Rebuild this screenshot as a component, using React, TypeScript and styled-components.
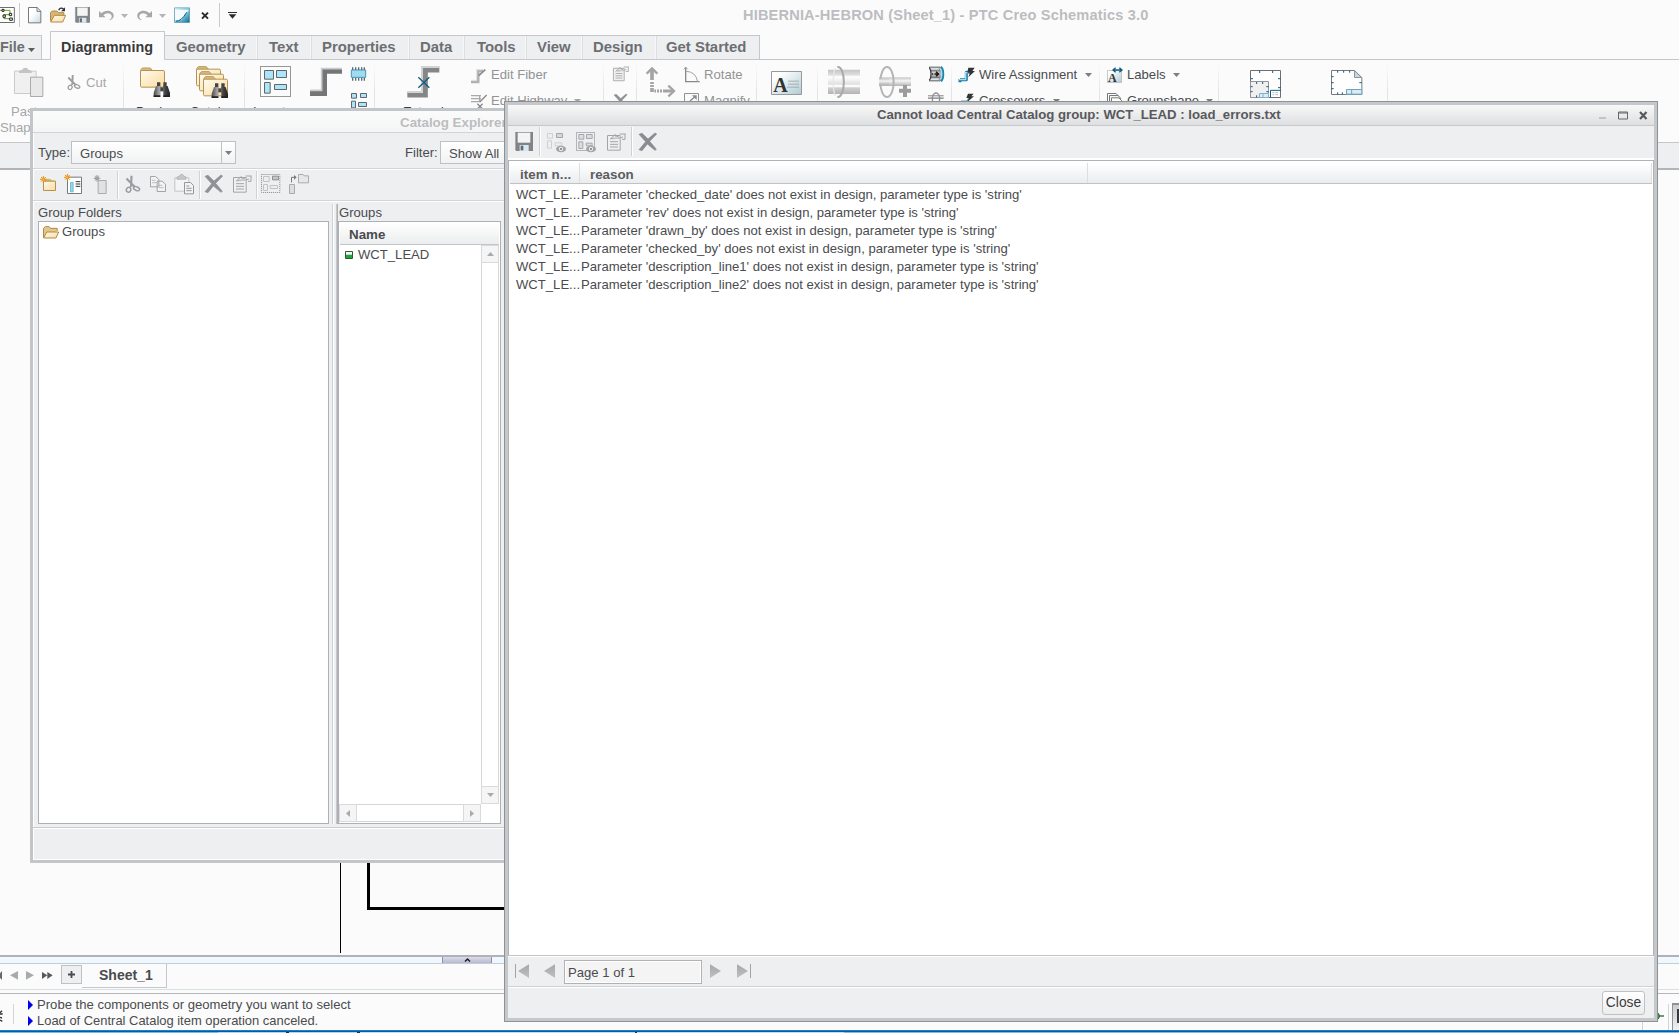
import React from "react";
import styled, { createGlobalStyle } from "styled-components";

const GlobalStyle = createGlobalStyle`
  * { box-sizing: border-box; }
  html, body { margin: 0; padding: 0; }
  body {
    width: 1679px; height: 1033px; overflow: hidden; background: #fbfbfb;
    font-family: "Liberation Sans", Arial, sans-serif; font-size: 13.1px; color: #4a4b4e;
  }
  svg { display: block; flex: none; overflow: visible; }
`;

const Screen = styled.div`
  position: relative; width: 1679px; height: 1033px; overflow: hidden;
  display: flex; flex-direction: column; background: #fbfbfb;
`;
const Label = styled.span<{ $s?: number; $ls?: number; $c?: string; $b?: boolean; $ml?: number }>`
  white-space: nowrap; flex: none; line-height: 16px;
  font-size: ${(p) => p.$s ?? 13.1}px; letter-spacing: ${(p) => p.$ls ?? 0}px;
  color: ${(p) => p.$c ?? "#4a4b4e"}; font-weight: ${(p) => (p.$b ? 700 : 400)};
  margin-left: ${(p) => p.$ml ?? 0}px;
`;
const IconBox = styled.span<{ $ml?: number; $mt?: number }>`
  display: block; flex: none; margin-left: ${(p) => p.$ml ?? 0}px; margin-top: ${(p) => p.$mt ?? 0}px;
`;

/* title bar */
const TitleBar = styled.header`
  height: 31px; flex: none; display: flex; align-items: flex-start; overflow: hidden;
`;
const QuickBar = styled.div`
  width: 743px; flex: none; display: flex; align-items: flex-start;
`;
const QuickRule = styled.i<{ $ml: number }>`
  width: 1px; height: 24px; margin: 3px 0 0 ${(p) => p.$ml}px; background: #c9cacc; flex: none;
`;
const AppTitle = styled.h1`
  margin: 7px 0 0; font: bold 14.6px/16px "Liberation Sans", Arial, sans-serif; color: #bcbdc0;
  white-space: nowrap; letter-spacing: 0.16px;
`;

/* ribbon tabs */
const Tabs = styled.nav`
  height: 29px; flex: none; display: flex; align-items: flex-end; box-shadow: inset 0 -1px #c5c7ca;
`;
const Tab = styled.div<{ $w: number; $x: number; $on?: boolean; $last?: boolean }>`
  width: ${(p) => p.$w}px; height: ${(p) => (p.$on ? 29 : 25)}px; flex: none; white-space: nowrap;
  padding: ${(p) => (p.$on ? 7 : 3)}px 0 0 ${(p) => p.$x}px;
  font: bold ${(p) => (p.$on ? 14.4 : 14.9)}px/17px "Liberation Sans", Arial, sans-serif;
  color: ${(p) => (p.$on ? "#3a3a3d" : "#6d6e72")};
  background: ${(p) => (p.$on ? "#fbfbfb" : "#edeff1")};
  border: solid #c5c7ca;
  border-width: ${(p) => (p.$on ? "1px 1px 0 1px" : "1px 0 1px 0")};
  border-radius: ${(p) => (p.$on ? 1 : 0)}px;
  box-shadow: ${(p) => (p.$on ? "none" : p.$last ? "inset -1px 0 #c5c7ca" : "inset -1px 0 #dcdee0, inset -2px 0 #f6f7f8")};
`;
const FileTab = styled(Tab)`
  display: flex; margin-right: 8px; box-shadow: inset -1px 0 #c5c7ca; font-size: 14.4px;
`;

/* ribbon */
const Ribbon = styled.section`
  height: 82px; flex: none; display: flex; overflow: hidden;
`;
const Group = styled.div<{ $w: number }>`
  width: ${(p) => p.$w}px; height: 82px; flex: none; display: flex; align-items: flex-start;
  border-right: 1px solid; border-image: linear-gradient(#fbfbfb 5%, #e3e4e6 40%, #e3e4e6) 1;
`;
const Col = styled.div<{ $w?: number; $ml?: number; $mt?: number }>`
  width: ${(p) => (p.$w ? p.$w + "px" : "auto")}; margin-left: ${(p) => p.$ml ?? 0}px; flex: none;
  padding-top: ${(p) => p.$mt ?? 0}px; display: flex; flex-direction: column; align-items: flex-start;
`;
const SmallRow = styled.div<{ $h?: number; $ml?: number }>`
  height: ${(p) => p.$h ?? 26}px; display: flex; align-items: center; margin-left: ${(p) => p.$ml ?? 0}px;
`;
const BigLabel = styled.div<{ $c?: string; $ml?: number; $first?: boolean }>`
  white-space: nowrap; line-height: 16px; color: ${(p) => p.$c ?? "#3a3a3d"}; margin-left: ${(p) => p.$ml ?? 0}px;
  width: 60px; flex: none; margin-top: ${(p) => (p.$first === false ? 0 : 5)}px;
`;
const GroupBand = styled.div`
  height: 28px; flex: none; background: #edeff1; border-top: 1px solid #c5c7ca; border-bottom: 2px solid #b2b4b7;
`;

/* canvas and bottom area */
const Canvas = styled.main`
  flex: 1; min-height: 0; background: #fbfbfb; overflow: hidden;
`;
const Drawing = styled.svg`
  margin: 690px 0 0 339px;
`;
const Splitter = styled.div`
  height: 9px; flex: none; background: #eff8fe; border-top: 2px solid #b0b2b5; border-bottom: 1px solid #c3cdd2;
`;
const Handle = styled.div`
  width: 50px; height: 6px; margin-left: 442px; border: solid #8d8da5; border-width: 0 1px;
  background: linear-gradient(#dcdcec, #b8b8d0); display: flex; justify-content: center;
`;
const SheetBar = styled.div`
  height: 26px; flex: none; display: flex; border-bottom: 1px solid #d8e2e6;
`;
const SheetAdd = styled.div`
  width: 21px; height: 19px; margin: 1px 0 0 8px; border: 1px solid #bfc1c4; background: #edeff1;
  display: flex; align-items: center; justify-content: center;
`;
const SheetTab = styled.div`
  width: 85px; height: 24px; border: solid #c5c7ca; border-width: 0 1px 1px 0; padding: 3px 0 0 17px;
`;
const Status = styled.footer`
  height: 37px; flex: none; margin-top: 3px; border-top: 1px solid #b5b7ba; display: flex;
`;
const StatusRule = styled.i<{ $ml: number; $h?: number }>`
  width: 1px; height: ${(p) => p.$h ?? 20}px; margin: 10px 0 0 ${(p) => p.$ml}px; background: #d3d4d6; flex: none;
`;
const Messages = styled.div`
  margin: 3px 0 0 14px; width: 1483px; display: flex; flex-direction: column; flex: none;
`;
const Message = styled.div`
  height: 16px; display: flex; align-items: center;
`;
const StatusEnd = styled.div`
  display: flex; margin-left: 124px; flex: none;
`;
const StatusButton = styled.div`
  width: 20px; height: 27px; margin: 9px 0 0 3px; border: 1px solid #8e9093; border-width: 2px 0 0 1px;
  background: linear-gradient(#c9cbce, #f0f0f1); padding: 4px 0 0 4px; flex: none;
`;
const TaskBar = styled.div`
  height: 3px; flex: none; border-top: 1px solid #0a84d8;
  background: linear-gradient(#10589a 0 1px, transparent 1px),
    linear-gradient(90deg, #7ab8de 0 218px, #b9d4e6 218px 286px, #0d3a5c 286px 289px, #b9d4e6 289px 357px, #0d3a5c 357px 360px, #c8dcea 360px 635px, #0d3a5c 635px 637px, #c8dcea 637px 844px, #86b8dc 844px);
`;

/* catalog window */
const CatalogWindow = styled.section`
  position: absolute; left: 30px; top: 108px; width: 600px; height: 755px; background: #edeff1;
  border: 3px solid #c3c6c9; display: flex; flex-direction: column; box-shadow: inset 1px 0 #fff;
`;
const CatalogTitle = styled.div`
  height: 22px; flex: none; border-bottom: 1px solid #d2d4d6; background: linear-gradient(#fbfbfb, #f4f5f5);
  padding: 4px 0 0 367px;
`;
const FilterRow = styled.div`
  height: 36px; flex: none; display: flex; align-items: flex-start; border-bottom: 1px solid #d2d4d6; padding: 8px 0 0 5px;
`;
const Combo = styled.div<{ $w: number }>`
  width: ${(p) => p.$w}px; height: 23px; border: 1px solid #bec0c3; flex: none;
  background: linear-gradient(#fff, #f1f2f3); display: flex; align-items: center; padding: 2px 0 0 8px;
`;
const ComboButton = styled.span`
  margin: -2px 0 0 auto; width: 14px; height: 21px; border-left: 1px solid #bec0c3; display: flex; align-items: center; justify-content: center;
`;
const CatalogTools = styled.div`
  height: 32px; flex: none; display: flex; border-top: 1px solid #fff; border-bottom: 1px solid #d2d4d6; padding-left: 7px;
`;
const ToolRule = styled.i<{ $ml: number; $h?: number }>`
  width: 2px; height: ${(p) => p.$h ?? 28}px; margin: 1px 0 0 ${(p) => p.$ml}px; background: linear-gradient(90deg, #cfd1d4 50%, #fff 50%); flex: none;
`;
const Panes = styled.div`
  height: 626px; flex: none; display: flex; border-top: 1px solid #fff; padding-left: 5px;
`;
const Pane = styled.div<{ $w: number }>`
  width: ${(p) => p.$w}px; flex: none; display: flex; flex-direction: column; padding-top: 2px;
`;
const PaneSplit = styled.div`
  width: 9px; height: 620px; margin-top: 2px; flex: none;
  background: linear-gradient(90deg, transparent 3px, #cfd1d4 3px 4px, #fff 4px 5px, transparent 5px 7px, #c6c8cb 7px 8px, #aeb0b3 8px);
`;
const PaneHead = styled.div<{ $x?: number }>`
  height: 17px; line-height: 18px; padding-left: ${(p) => p.$x ?? 0}px; white-space: nowrap;
`;
const Tree = styled.div`
  height: 603px; border: 1px solid #aeb0b3; background: #fff; padding: 2px 0 0 4px;
`;
const TreeItem = styled.div`
  display: flex; height: 16px; align-items: center;
`;
const ListBox = styled(Tree)`
  padding: 1px; display: flex; flex-direction: column;
`;
const ListHead = styled.div`
  height: 22px; flex: none; background: linear-gradient(#fff, #ebedee); border-bottom: 1px solid #c3c5c8; padding: 4px 0 0 9px;
`;
const ListBody = styled.div`
  height: 559px; flex: none; display: flex;
`;
const Items = styled.div`
  flex: 1; padding: 2px 0 0 5px;
`;
const VScroll = styled.div`
  width: 18px; border: 1px solid #d4d6d8; display: flex; flex-direction: column; justify-content: space-between; background: #fff;
`;
const ScrollBtn = styled.div`
  width: 16px; height: 16px; background: #f5f5f6; display: flex; align-items: center; justify-content: center;
  box-shadow: 0 0 0 1px #d9dadc; flex: none;
`;
const HScroll = styled.div`
  width: 142px; height: 18px; margin-left: -1px; border: 1px solid #d4d6d8; display: flex; justify-content: space-between; background: #fff;
`;
const CatalogFooter = styled.div`
  flex: 1; border-top: 1px solid #c9cbce; box-shadow: inset 0 1px #fff, inset 0 -1px #fff;
`;

/* error dialog */
const Dialog = styled.section`
  position: absolute; left: 504px; top: 101px; width: 1154px; height: 921px; background: #edeff1;
  border: 1px solid #8f9194; box-shadow: inset 0 0 0 3px #c5c8ca; padding: 3px; display: flex; flex-direction: column;
`;
const DialogTitle = styled.div`
  height: 21px; flex: none; display: flex; background: linear-gradient(#f8f8f8, #dedfe1); border-bottom: 1px solid #c6c8ca;
  padding: 2px 0 0 369px;
`;
const WinButtons = styled.div`
  margin: 4px 6px 0 auto; display: flex;
`;
const DialogTools = styled.div`
  height: 34px; flex: none; display: flex; border-bottom: 2px solid; border-image: linear-gradient(#d0d2d4 50%, #fff 50%) 1; padding-left: 7px;
`;
const Grid = styled.div`
  height: 796px; flex: none; background: #fff; border: 1px solid #b0b2b5; padding: 1px 1px 0 1px;
  border-bottom-color: #c3c5c8;
`;
const GridHead = styled.div`
  height: 22px; display: flex; background: linear-gradient(#fff 10%, #eaecee); border-bottom: 1px solid #c0c2c5;
`;
const HeadCell = styled.div<{ $w: number; $x: number }>`
  width: ${(p) => p.$w}px; padding: 4px 0 0 ${(p) => p.$x}px; border-right: 1px solid #dcdee0; flex: none; margin-top: 1px; height: 20px;
`;
const GridRows = styled.div`
  padding: 1px 0 0 6px;
`;
const GridRow = styled.div`
  height: 18px; display: flex; align-items: center;
`;
const Cell = styled.div<{ $w: number; $ls?: number }>`
  width: ${(p) => p.$w}px; white-space: nowrap; letter-spacing: ${(p) => p.$ls ?? 0}px; flex: none;
`;
const Pager = styled.div`
  height: 31px; flex: none; display: flex; align-items: flex-start; border-top: 1px solid #fff; border-bottom: 1px solid #cfd1d4; padding: 2px 0 0 7px;
`;
const PageField = styled.div`
  width: 138px; height: 24px; border: 1px solid #b0b2b5; box-shadow: inset 0 0 0 1px #fff; background: #f4f4f4; padding: 4px 0 0 3px; margin: 1px 8px 0 9px; white-space: nowrap;
`;
const DialogFooter = styled.div`
  flex: 1; border-top: 1px solid #fff; display: flex; justify-content: flex-end; padding: 3px 9px 0 0;
`;
const CloseButton = styled.button`
  width: 43px; height: 24px; border: 1px solid #bfc1c4; border-radius: 3px; background: linear-gradient(#fff, #ececed); padding: 0;
  font: 13.8px/20px "Liberation Sans", Arial, sans-serif; color: #3a3a3d; text-align: center;
`;

type IconProps = { x: number; y: number; w: number; h: number; ml?: number; mt?: number; children: React.ReactNode };
/* Artwork is authored at three units per pixel. */
const Icon = ({ x, y, w, h, ml, mt, children }: IconProps) => (
  <IconBox $ml={ml} $mt={mt}>
    <svg width={w} height={h} viewBox={`${x} ${y} ${w * 3} ${h * 3}`} fill="none">{children}</svg>
  </IconBox>
);
const Caret = ({ ml = 0, mt = 0, c = "#7d7e81" }: { ml?: number; mt?: number; c?: string }) => (
  <IconBox $ml={ml} $mt={mt}><svg width="7" height="4"><path d="M0 0h7L3.5 4z" fill={c} /></svg></IconBox>
);

const Gradients = styled.svg`
  position: absolute; width: 0; height: 0;
`;
const Defs = () => (
  <Gradients>
    <defs>
      <linearGradient id="fold" x1="0" y1="0" x2="1" y2="1"><stop offset="0" stopColor="#fffaf0" /><stop offset="1" stopColor="#fbdc9d" /></linearGradient>
      <linearGradient id="doc" x1="0" y1="0" x2="1" y2="1"><stop offset="0.4" stopColor="#fff" /><stop offset="1" stopColor="#c4d8e6" /></linearGradient>
      <linearGradient id="card" x1="0" y1="0" x2="1" y2="1"><stop offset="0.2" stopColor="#fff" /><stop offset="1" stopColor="#afcbd3" /></linearGradient>
      <linearGradient id="tube" x1="0" y1="0" x2="0" y2="1"><stop offset="0" stopColor="#c4c4c4" /><stop offset="0.4" stopColor="#f5f5f5" /><stop offset="1" stopColor="#b4b4b4" /></linearGradient>
      <linearGradient id="drum" x1="0" y1="0" x2="0" y2="1"><stop offset="0" stopColor="#6d6e70" /><stop offset="0.45" stopColor="#f5f5f5" /><stop offset="1" stopColor="#5c5d60" /></linearGradient>
      <linearGradient id="dark"><stop offset="0" stopColor="#4a4a4a" /><stop offset="0.35" stopColor="#a8a8a8" /><stop offset="0.7" stopColor="#444" /><stop offset="1" stopColor="#222" /></linearGradient>
      <linearGradient id="teal" x1="0" y1="0" x2="1" y2="1"><stop offset="0" stopColor="#f2fbff" /><stop offset="0.5" stopColor="#8ed4e8" /><stop offset="1" stopColor="#0a6c92" /></linearGradient>
      <linearGradient id="arrow" x1="0" y1="0" x2="0" y2="1"><stop offset="0" stopColor="#a6a7a9" /><stop offset="1" stopColor="#bfc0c2" /></linearGradient>
    </defs>
  </Gradients>
);

const Folder = ({ x, y }: { x: number; y: number }) => (
  <g transform={`translate(${x} ${y})`}>
    <path d="M2 14V8l5-6h24l5 6v6z" fill="#d8bc80" stroke="#b99a5c" strokeWidth="3" />
    <rect x="1.500" y="9.500" width="72" height="50" rx="4" fill="url(#fold)" stroke="#b4924f" strokeWidth="3" />
  </g>
);
const Binoculars = ({ x, y }: { x: number; y: number }) => (
  <g transform={`translate(${x} ${y})`} fill="url(#dark)">
    <path d="M10 1h10v11H10zM29 1h10v11H29z" fill="#444" /><path d="M7 12h14l-1 33H0V33zM28 12h14l7 21v12H29z" /><path d="M20 16h9v12h-9z" fill="#444" />
    <path d="M0 40h20v5H0zM29 40h20v5H29z" fill="#222" />
  </g>
);
const Cross = ({ x, y, s = 1, c = "#909194" }: { x: number; y: number; s?: number; c?: string }) => (
  <path transform={`translate(${x} ${y}) scale(${s})`} d="M0 4l9-3 18 17L48 0l5 3-21 22 20 24-4 3-23-19L9 53l-9-3 20-24z" fill={c} stroke={c} strokeWidth="2" />
);
const Scissors = ({ x, y, s = 1 }: { x: number; y: number; s?: number }) => (
  <g transform={`translate(${x} ${y}) scale(${s})`} stroke="#9c9da0" strokeWidth="4">
    <path d="M4 8l24 24M18 0l-1 30" strokeWidth="6" /><ellipse cx="10" cy="39" rx="6" ry="7" transform="rotate(30 10 39)" /><ellipse cx="32" cy="36" rx="9" ry="5" transform="rotate(25 32 36)" /><path d="M18 26l-5 8" />
  </g>
);
const Props = ({ x, y }: { x: number; y: number }) => (
  <g transform={`translate(${x} ${y})`} stroke="#a3a4a7" strokeWidth="3">
    <path d="M1.500 8.500h38v44h-38z" fill="#f0f0f1" /><path d="M9 27h24M9 35h24M9 43h24" />
    <path d="M9 20L24 6l14 10 10-3M12 18h12M24 10h10M38 4h18M54 4v16h-9" /><path d="M18 14h22v5H18z" fill="#c6c7c9" stroke="none" />
  </g>
);
const Spark = ({ x, y, gray }: { x: number; y: number; gray?: boolean }) => (
  <g transform={`translate(${x} ${y})`} stroke={gray ? "#9a9b9e" : "#e8911c"} strokeWidth="3">
    <path d="M10 0v20M0 10h20M3 3l14 14M17 3L3 17" /><circle cx="10" cy="10" r="4" fill={gray ? "#aaa" : "#ffc83c"} />
  </g>
);
const Floppy = ({ x, y, s = 1 }: { x: number; y: number; s?: number }) => (
  <g transform={`translate(${x} ${y}) scale(${s})`}>
    <path d="M0 0h54v57H4l-4-4z" fill="#828386" /><path d="M8 2h38v30H8z" fill="#f4f4f5" /><path d="M14 39h27v18H14z" fill="#d5e9f5" /><path d="M17 41h8v14h-8z" fill="#66676a" />
    <path d="M1.500 1v52" stroke="#aaa" strokeWidth="3" />
  </g>
);
const EyeMark = ({ x, y }: { x: number; y: number }) => (
  <g transform={`translate(${x} ${y})`}><ellipse cx="15" cy="9" rx="15" ry="9.500" fill="#a2a3a5" /><circle cx="15" cy="9" r="6.500" fill="#ececed" /><circle cx="15" cy="9" r="3" fill="#77787a" /></g>
);
const Undo = ({ flip }: { flip?: boolean }) => (
  <svg width="16" height="13" viewBox="0 0 48 39" fill="none">
    <g transform={flip ? "matrix(-1 0 0 1 48 0)" : undefined}><path d="M3 6v19h20l-7-6c8-10 24-8 25 2 1 6-3 10-8 12 11 0 15-8 14-15C45 4 22 0 10 13z" fill="#a6a7aa" /></g>
  </svg>
);
const Sheath = ({ x, y }: { x: number; y: number }) => (
  <g transform={`translate(${x} ${y})`}>
    <path d="M8 12h30v26H8z" fill="url(#drum)" /><path d="M3 5h34M3 45h34" stroke="#8a8b8e" strokeWidth="5" />
    <path d="M4 6c7 8 7 30 0 38" stroke="#3d3e40" strokeWidth="4" /><path d="M31 4c7 8 7 32 0 42" stroke="#8c8d90" strokeWidth="3" />
    <path d="M38 4c9 6 9 36 0 42" stroke="#1b86ad" strokeWidth="8" /><path d="M38 8c5 6 5 28 0 34" stroke="#bfe6f4" strokeWidth="3" />
    <path d="M12 25h4m3 0h12M24 18l8 7-8 7" stroke="#111" strokeWidth="4" />
  </g>
);

const rows = ["checked_date", "rev", "drawn_by", "checked_by", "description_line1", "description_line2"];

const QuickAccess = () => (
  <QuickBar>
    <Icon x={0} y={21} w={15} h={16} mt={7}>
      <path d="M-6 22.500h49v45h-49z" fill="#fff" stroke="#6d6e70" strokeWidth="3" />
      <path d="M9 31h21v13H12v12h20M-2 31h8" stroke="#67a01e" strokeWidth="3" /><path d="M6 28h6v6H6zM28 40h7v7h-7zM9 45h7v7H9zM29 54h8v7h-8z" fill="#fff" stroke="#222" strokeWidth="3" />
    </Icon>
    <QuickRule $ml={4} />
    <Icon x={84} y={21} w={14} h={16} ml={8} mt={7}><path d="M85.500 22.500h26l11 11v35h-37z" fill="url(#doc)" stroke="#77787b" strokeWidth="3" /><path d="M111 23v11h12" stroke="#77787b" strokeWidth="3" /></Icon>
    <Icon x={150} y={18} w={17} h={17} ml={8} mt={6}>
      <path d="M151.500 62V38l5-5h14l4 5h17v8" fill="#d9b676" stroke="#b08a45" strokeWidth="3" /><path d="M152 66l11-20h34l-9 20z" fill="url(#fold)" stroke="#b08a45" strokeWidth="3" />
      <path d="M176 31c3-8 10-8 15-3" stroke="#333" strokeWidth="4" /><path d="M195 22v12h-12z" fill="#333" />
    </Icon>
    <Icon x={226} y={21} w={15} h={16} ml={8} mt={7}><Floppy x={226} y={21} s={0.83} /></Icon>
    <IconBox $ml={8} $mt={9}><Undo /></IconBox><Caret ml={7} mt={14} c="#b3b4b6" />
    <IconBox $ml={9} $mt={9}><Undo flip /></IconBox><Caret ml={6} mt={14} c="#b3b4b6" />
    <Icon x={522} y={21} w={16} h={16} ml={8} mt={7}><path d="M523.500 23.500h45v44h-45z" fill="url(#teal)" stroke="#4d8ca3" strokeWidth="2" /><path d="M525 30h41l-22 30h-19z" fill="#f3fbfd" /><path d="M528 64q16 0 32-27" stroke="#0f5d80" strokeWidth="3" /></Icon>
    <Icon x={603} y={39} w={9} h={8} ml={11} mt={12}><path d="M606 41l18 18M624 41l-18 18" stroke="#2b2b2d" strokeWidth="6" /></Icon>
    <QuickRule $ml={9} />
    <Icon x={684} y={36} w={9} h={7} ml={8} mt={12}><path d="M684 37.500h27" stroke="#2b2b2d" strokeWidth="3" /><path d="M686 43h23l-11.500 13z" fill="#2b2b2d" /></Icon>
  </QuickBar>
);

const RibbonBar = () => (
  <Ribbon>
    <Group $w={124}>
      <Col $w={66} $mt={7}>
        <Icon x={42} y={201} w={30} h={32} ml={14}>
          <path d="M43.500 213.500h65v67h-65z" fill="#f0f0f0" stroke="#c9cacc" strokeWidth="3" /><path d="M57 219v-7l10-3c2-8 16-8 18 0l10 3v7z" fill="#c3c4c6" /><path d="M91.500 231.500h37v58h-37z" fill="#e8e8e9" stroke="#a9aaad" strokeWidth="3" />
        </Icon>
        <BigLabel $c="#a6a7aa" $ml={11}>Paste</BigLabel>
        <BigLabel $c="#a6a7aa" $first={false}>Shapes</BigLabel>
      </Col>
      <SmallRow $h={45} $ml={1}><Icon x={201} y={223} w={14} h={16}><Scissors x={201} y={223} s={0.95} /></Icon><Label $c="#a6a7aa" $ml={5}>Cut</Label></SmallRow>
    </Group>
    <Group $w={121}>
      <Col $mt={6} $ml={12} $w={54}>
        <Icon x={420} y={201} w={31} h={33} ml={4}><Folder x={420} y={205} /><Binoculars x={461} y={249} /></Icon>
        <BigLabel $ml={0}>Design</BigLabel>
      </Col>
      <Col $mt={6} $w={50}>
        <Icon x={588} y={198} w={33} h={33} ml={6}><Folder x={588} y={198} /><Folder x={597} y={213} /><Folder x={609} y={228} /><Binoculars x={635} y={249} /></Icon>
        <BigLabel>Catalog</BigLabel>
      </Col>
    </Group>
    <Group $w={130}>
      <Col $mt={6} $ml={8} $w={57}>
        <Icon x={780} y={198} w={31} h={33} ml={7}>
          <path d="M781.500 199.500h90v90h-90z" stroke="#333" strokeWidth="3" strokeDasharray="3 3" />
          <path d="M793.500 211.500h27v26h-27zM829.500 211.500h30v21h-30zM793.500 247.500h17v32h-17zM823.500 253.500h36v15h-36z" fill="#a9e5fb" stroke="#626467" strokeWidth="3" />
        </Icon>
        <BigLabel>Insert</BigLabel>
      </Col>
      <Icon x={930} y={204} w={33} h={29} mt={8}><path d="M930 280h43v-67h53" stroke="#747577" strokeWidth="16" /><path d="M930 271h35v-65h61" stroke="#c9cacc" strokeWidth="5" /></Icon>
      <Col $ml={8} $mt={7}>
        <Icon x={1053} y={201} w={15} h={14}><path d="M1054 210h43v22h-43z" fill="#9fdcf2" stroke="#4f95b5" strokeWidth="3" /><path d="M1058 202v8m9-8v8m9-8v8m9-8v8m8-8v8M1058 233v9m9-9v9m9-9v9m9-9v9m8-9v9" stroke="#556d7b" strokeWidth="4" /></Icon>
        <Icon x={1053} y={279} w={17} h={16} mt={12}><path d="M1054.500 280.500h15v14h-15zM1081.500 280.500h18v12h-18zM1054.500 303.500h12v20h-12zM1075.500 307.500h24v12h-24z" fill="#a9e5fb" stroke="#626467" strokeWidth="3" /></Icon>
      </Col>
    </Group>
    <Group $w={229}>
      <Col $ml={27} $mt={6} $w={69}>
        <Icon x={80} y={198} w={33} h={33} ml={5}><path d="M81 284h53v-75h43" stroke="#858688" strokeWidth="17" /><path d="M81 276h44v-75h52" stroke="#d2d3d5" strokeWidth="6" /><path d="M114 232l33 31M147 232l-33 31" stroke="#0f5d80" strokeWidth="4" /></Icon>
        <BigLabel $ml={1}>Extend</BigLabel>
      </Col>
      <Col $mt={2}>
        <SmallRow><Icon x={276} y={197} w={16} h={17}><path d="M276 241h21v-33h15" stroke="#b0b1b3" strokeWidth="9" /><path d="M276 237h17v-32h18" stroke="#e6e6e7" strokeWidth="3" /><path d="M299 223l20-18" stroke="#88898c" strokeWidth="5" /></Icon><Label $ml={4} $c="#929396">Edit Fiber</Label></SmallRow>
        <SmallRow><Icon x={276} y={276} w={16} h={17}><path d="M276 284h30M276 293h30M276 302h30M302 284v18" stroke="#a8a9ab" strokeWidth="4" /><path d="M303 302l20-20M295 308l16 16M311 308l-16 16" stroke="#88898c" strokeWidth="4" /></Icon><Label $ml={4} $c="#929396">Edit Highway</Label><Caret ml={7} c="#a5a6a9" /></SmallRow>
      </Col>
    </Group>
    <Group $w={33}>
      <Col $ml={9} $mt={5}><Icon x={698} y={195} w={17} h={18}><g transform="translate(698 195) scale(.85)"><Props x={0} y={3} /></g></Icon><Icon x={702} y={281} w={14} h={14} mt={11} ml={1}><Cross x={702} y={281} s={0.75} /></Icon></Col>
    </Group>
    <Group $w={120}>
      <Icon x={795} y={201} w={30} h={31} ml={9} mt={7}>
        <path d="M813 207v33M813 246v6M813 255v6M813 264v12" stroke="#a3a4a6" strokeWidth="11" /><path d="M820 273h5M828 273h6M837 273h6M846 273h32" stroke="#a3a4a6" strokeWidth="9" />
        <path d="M797 221l16-16 16 16M862 257l17 16-17 16" stroke="#a3a4a6" strokeWidth="7" />
      </Icon>
      <Col $ml={8} $mt={2}>
        <SmallRow><Icon x={912} y={198} w={16} h={16}><path d="M917 199v43h42" stroke="#88898c" strokeWidth="4" /><path d="M912 205l5-7 6 7M917 211q30 0 36 31" stroke="#a0a1a3" strokeWidth="3" /></Icon><Label $ml={4} $c="#929396">Rotate</Label></SmallRow>
        <SmallRow><Icon x={912} y={276} w={16} h={16}><path d="M913.500 277.500h42v40h-42z" stroke="#919295" strokeWidth="3" /><path d="M930 300l16-14" stroke="#88898c" strokeWidth="4" /><path d="M936 283h14v14z" fill="#88898c" /></Icon><Label $ml={4} $c="#929396">Magnify</Label></SmallRow>
      </Col>
    </Group>
    <Group $w={61}>
      <Icon x={33} y={213} w={31} h={24} ml={14} mt={11}><path d="M34.500 214.500h90v69h-90z" fill="url(#card)" stroke="#97999b" strokeWidth="3" /><text x="40" y="276" fontFamily="Liberation Serif" fontWeight="700" fontSize="60" fill="#333">A</text><path d="M84 243.500h33M84 252.500h33M81 261.500h36" stroke="#8d9496" strokeWidth="2" /></Icon>
    </Group>
    <Group $w={134}>
      <Icon x={204} y={198} w={32} h={32} ml={10} mt={6}><path d="M204 209h96v18h-96zM204 236h96v18h-96zM204 262h96v20h-96z" fill="url(#tube)" /><path d="M232 201c26-4 26 94 0 90" stroke="#a8a9ab" strokeWidth="6" /><path d="M226 204c-8 14-8 70 0 84" stroke="#e6e6e6" strokeWidth="4" /></Icon>
      <Icon x={357} y={198} w={32} h={32} ml={19} mt={6}><path d="M357 232h96v26h-96z" fill="url(#tube)" /><ellipse cx="381" cy="246" rx="20" ry="45" stroke="#b4b5b7" strokeWidth="6" /><path d="M357 236h30v18h-30z" fill="url(#tube)" /><path d="M435 255v36M417 272.500h36" stroke="#9b9c9e" strokeWidth="12" /></Icon>
      <Col $ml={17} $mt={6}><Icon x={504} y={198} w={16} h={16}><Sheath x={504} y={197} /></Icon><Icon x={504} y={276} w={16} h={16} mt={10}><path d="M504 286h47v10h-47z" fill="url(#drum)" /><ellipse cx="528" cy="296" rx="11" ry="17" stroke="#8c8d90" strokeWidth="4" /></Icon></Col>
    </Group>
    <Group $w={148}>
      <Col $ml={7} $mt={2}>
        <SmallRow><Icon x={597} y={198} w={16} h={16}><path d="M600 234v10M600 236h19v-22h13" stroke="#1b7ea8" strokeWidth="9" strokeLinejoin="round" /><path d="M597 236h20v-21h11" stroke="#a7dbf0" strokeWidth="4" /><path d="M625 200h19l-7 10h8l-20 19 5-14h-8z" fill="#333" /></Icon><Label $ml={4}>Wire Assignment</Label><Caret ml={8} /></SmallRow>
        <SmallRow><Icon x={603} y={276} w={16} h={16} ml={1}><path d="M606 301h18l10-15" stroke="#5fa5c4" strokeWidth="5" /><path d="M627 278h17l-7 8h8l-20 17 5-12h-8z" fill="#333" /></Icon><Label $ml={3}>Crossovers</Label><Caret ml={8} /></SmallRow>
      </Col>
    </Group>
    <Group $w={119}>
      <Col $ml={7} $mt={2}>
        <SmallRow><Icon x={1041} y={198} w={16} h={16}><path d="M1042.500 208.500h42v36h-42z" fill="url(#card)" stroke="#adafb1" strokeWidth="2" /><text x="1044" y="242" fontFamily="Liberation Serif" fontWeight="700" fontSize="36" fill="#333">A</text><path d="M1060 207h22M1067 200l-8 7 8 7M1078 214l8-7-8-7" stroke="#0f5d80" strokeWidth="4" /></Icon><Label $ml={4}>Labels</Label><Caret ml={7} /></SmallRow>
        <SmallRow><Icon x={1041} y={276} w={16} h={16}><path d="M1042.500 277.500h26l7 8v30h-33z" fill="#fff" stroke="#77787b" strokeWidth="3" /><path d="M1048.500 283.500h26l7 8v30h-33z" fill="#f6f7e9" stroke="#77787b" strokeWidth="3" /><path d="M1054.500 290.500h22l10 10v24h-32z" fill="#fff" stroke="#77787b" strokeWidth="3" /></Icon><Label $ml={4}>Groupshape</Label><Caret ml={7} /></SmallRow>
      </Col>
    </Group>
    <Group $w={169}>
      <Icon x={150} y={210} w={31} h={28} ml={31} mt={10}>
        <path d="M151.500 211.500h90v81h-90z" fill="#fff" stroke="#6d6f72" strokeWidth="3" /><path d="M151.500 244.500h54v48h-54z" fill="#f0f0f0" stroke="#929497" strokeWidth="3" />
        <path d="M179 212v7M218 212v7M152 236h7M234 236h8M234 263h8M170 246v6M188 246v6M152 260h6M152 275h6M199 260h7M199 275h7M170 286v6" stroke="#0f5d80" strokeWidth="3" />
        <path d="M178.500 280.500h27v12h-27zM189 281v11" stroke="#7fb0cc" strokeWidth="3" fill="#dcebf4" /><path d="M211.500 292v-21h31" stroke="#0f5d80" strokeWidth="3" /><path d="M217 278h6m3 0h8M217 284h6m3 0h8" stroke="#999" strokeWidth="2" />
      </Icon>
      <Icon x={393} y={210} w={31} h={25} ml={50} mt={10}>
        <path d="M394.500 211.500h69l22 21v51h-91z" fill="#fff" stroke="#77797c" strokeWidth="3" /><path d="M463.500 212v20.500h21z" fill="#c5d8e6" stroke="#929497" strokeWidth="3" />
        <path d="M413 212v6M431 212v6M449 212v6M394 230h7M394 248h7M394 266h7M478 248h7M413 277v6M427 277v6" stroke="#0f5d80" strokeWidth="3" /><path d="M439.500 268.500h46v14h-46zM455 269v14" fill="#dcebf4" stroke="#6ba5c4" strokeWidth="3" />
      </Icon>
    </Group>
  </Ribbon>
);

const Catalog = () => (
  <CatalogWindow>
    <CatalogTitle><Label $b $s={13.33} $c="#bcbdc0">Catalog Explorer</Label></CatalogTitle>
    <FilterRow>
      <Col $mt={4} $w={33}><Label>Type:</Label></Col>
      <Combo $w={165}><Label>Groups</Label><ComboButton><Caret /></ComboButton></Combo>
      <Col $mt={4} $ml={169} $w={35}><Label>Filter:</Label></Col>
      <Combo $w={120}><Label>Show All</Label></Combo>
    </FilterRow>
    <CatalogTools>
      <Icon x={120} y={138} w={16} h={16} mt={6}><path d="M130 156v-6l4-4h17l3 5h9v5z" fill="#d6b877" /><path d="M130.500 153.500h36v28h-36z" fill="url(#fold)" stroke="#b4924f" strokeWidth="3" /><Spark x={120} y={138} /></Icon>
      <Icon x={192} y={132} w={18} h={20} ml={8} mt={4}><path d="M202.500 141.500h42v49h-42z" fill="#fff" stroke="#77797c" strokeWidth="3" /><path d="M211.500 157.500h8v28h-8z" fill="#8fdcf4" stroke="#5b9fb8" strokeWidth="2" /><path d="M227 155h14M227 162h14M227 169h14" stroke="#333" strokeWidth="3" /><Spark x={192} y={132} /></Icon>
      <Icon x={278} y={134} w={14} h={19} ml={11} mt={5}><path d="M293.500 150.500h24v39h-24z" fill="#e0e1e3" stroke="#aaabad" strokeWidth="3" /><Spark x={280} y={134} gray /></Icon>
      <ToolRule $ml={10} />
      <Icon x={375} y={136} w={15} h={19} ml={6} mt={5}><Scissors x={375} y={138} s={1.08} /></Icon>
      <Icon x={450} y={138} w={17} h={17} ml={10} mt={6}><path d="M451.500 139.500h15l10 9v22h-25zM471.500 153.500h15l10 9v22h-25z" fill="#f3f3f4" stroke="#a3a4a7" strokeWidth="3" /><path d="M456 151h10M456 158h14M477 166h10M477 173h14" stroke="#a3a4a7" strokeWidth="2" /></Icon>
      <Icon x={522} y={132} w={21} h={20} ml={7} mt={4}><path d="M524.500 143.500h42v40h-42z" fill="#f4f4f5" stroke="#c3c4c6" strokeWidth="3" /><path d="M531 148v-7l7-2c2-8 12-8 14 0l6 2v7z" fill="#c6c7c9" stroke="#aaa" strokeWidth="2" /><path d="M553.500 157.500h18l9 9v25h-27z" fill="#f3f3f4" stroke="#96979a" strokeWidth="3" /><path d="M559 168h9M559 175h16M559 182h16" stroke="#96979a" strokeWidth="3" /></Icon>
      <ToolRule $ml={4} />
      <Icon x={615} y={136} w={19} h={18} ml={4} mt={5}><Cross x={615} y={136} /></Icon>
      <Icon x={699} y={133} w={20} h={19} ml={9} mt={4}><Props x={699} y={135} /></Icon>
      <ToolRule $ml={3} />
      <Icon x={786} y={132} w={20} h={20} ml={3} mt={4}><path d="M787.500 133.500h55v54h-55z" stroke="#88898c" strokeWidth="3" strokeDasharray="3 3" /><path d="M793.500 139.500h17v15h-17zM793.500 163.500h12v18h-12zM813.500 166.500h22v9h-22z" fill="#eee" stroke="#c1c2c4" strokeWidth="3" /><path d="M820.500 138.500h18v11h-18z" fill="#c5c6c8" stroke="#8c8d90" strokeWidth="3" /></Icon>
      <Icon x={870} y={132} w={20} h={20} ml={8} mt={4}><path d="M871.500 163.500h15v27h-15z" fill="#dcdddf" stroke="#aaabad" strokeWidth="3" /><path d="M877.500 157v-15h9" stroke="#77787b" strokeWidth="3" /><path d="M885 135l8 7-8 7z" fill="#77787b" /><path d="M898.500 138.500v-5h14l3 4h13v21h-30z" fill="#e6e7e8" stroke="#aaabad" strokeWidth="3" /></Icon>
    </CatalogTools>
    <Panes>
      <Pane $w={291}>
        <PaneHead>Group Folders</PaneHead>
        <Tree>
          <TreeItem>
            <Icon x={129} y={287} w={16} h={13}><path d="M130.500 322v-28l5-5h12l4 5h20v8" fill="#e4c78c" stroke="#b08a45" strokeWidth="3" /><path d="M131 323l9-18h36l-8 18z" fill="url(#fold)" stroke="#b08a45" strokeWidth="3" /></Icon>
            <Label $ml={3}>Groups</Label>
          </TreeItem>
        </Tree>
      </Pane>
      <PaneSplit />
      <Pane $w={163}>
        <PaneHead $x={1}>Groups</PaneHead>
        <ListBox>
          <ListHead><Label $b $s={13.33}>Name</Label></ListHead>
          <ListBody>
            <Items>
              <TreeItem>
                <Icon x={75} y={360} w={8} h={8}><path d="M76.500 361.500h21v21h-21z" fill="#fff" stroke="#2f5a2f" strokeWidth="3" /><path d="M78 371h18v10H78z" fill="#1fa536" /></Icon>
                <Label $ml={5}>WCT_LEAD</Label>
              </TreeItem>
            </Items>
            <VScroll>
              <ScrollBtn><svg width="7" height="4"><path d="M0 4h7L3.500 0z" fill="#a9aaad" /></svg></ScrollBtn>
              <ScrollBtn><svg width="7" height="4"><path d="M0 0h7L3.500 4z" fill="#a9aaad" /></svg></ScrollBtn>
            </VScroll>
          </ListBody>
          <HScroll>
            <ScrollBtn><svg width="4" height="7"><path d="M4 0v7L0 3.500z" fill="#a9aaad" /></svg></ScrollBtn>
            <ScrollBtn><svg width="4" height="7"><path d="M0 0v7l4-3.500z" fill="#a9aaad" /></svg></ScrollBtn>
          </HScroll>
        </ListBox>
      </Pane>
    </Panes>
    <CatalogFooter />
  </CatalogWindow>
);

const ErrorDialog = () => (
  <Dialog>
    <DialogTitle>
      <Label $b $s={13.2} $c="#58595c">Cannot load Central Catalog group: WCT_LEAD : load_errors.txt</Label>
      <WinButtons>
        <svg width="49" height="10" viewBox="0 0 49 10"><path d="M0 6h7v2H0z" fill="#c1c2c4" /><path d="M19.500 1h9v7h-9zM19 2h10" stroke="#66676a" fill="none" /><path d="M41 1l6.500 7M47.500 1L41 8" stroke="#58595c" strokeWidth="2.200" /></svg>
      </WinButtons>
    </DialogTitle>
    <DialogTools>
      <Icon x={405} y={396} w={18} h={20} mt={6}><Floppy x={405} y={396} /></Icon>
      <ToolRule $ml={6} $h={29} />
      <Icon x={501} y={396} w={20} h={21} ml={6} mt={6}><path d="M502.500 400.500h15v14h-15zM502.500 422.500h12v22h-12zM525.500 428.500h20v9h-20z" stroke="#cfd0d2" strokeWidth="3" /><path d="M529.500 400.500h18v12h-18z" fill="#d6d7d9" stroke="#a5a6a9" strokeWidth="3" /><EyeMark x={528} y={438} /></Icon>
      <Icon x={588} y={396} w={20} h={21} ml={9} mt={6}><path d="M589.500 397.500h54v54h-54z" stroke="#77787b" strokeWidth="3" strokeDasharray="3 3" /><path d="M596.500 403.500h15v14h-15zM596.500 425.500h12v20h-12zM619.500 403.500h17v12h-17zM618.500 429.500h18v8h-18z" fill="#dcdddf" stroke="#a5a6a9" strokeWidth="3" /><EyeMark x={618} y={438} /></Icon>
      <Icon x={681} y={396} w={20} h={20} ml={11} mt={6}><Props x={681} y={398} /></Icon>
      <ToolRule $ml={4} $h={29} />
      <Icon x={777} y={400} w={19} h={18} ml={6} mt={7}><Cross x={777} y={400} c="#8a8b8e" /></Icon>
    </DialogTools>
    <Grid>
      <GridHead>
        <HeadCell $w={70} $x={10}><Label $b $s={13.33} $ls={0.1} $c="#5c5d60">item n...</Label></HeadCell>
        <HeadCell $w={508} $x={10}><Label $b $s={13.33} $c="#5c5d60">reason</Label></HeadCell>
        <HeadCell $w={564} $x={0} />
      </GridHead>
      <GridRows>
        {rows.map((name) => (
          <GridRow key={name}>
            <Cell $w={65}>WCT_LE...</Cell>
            <Cell $w={600}>{`Parameter '${name}' does not exist in design, parameter type is 'string'`}</Cell>
          </GridRow>
        ))}
      </GridRows>
    </Grid>
    <Pager>
      <Icon x={45} y={132} w={14} h={14} mt={5}><path d="M46.500 132v42" stroke="#a3a4a6" strokeWidth="3" /><path d="M87 133v41l-33-21z" fill="url(#arrow)" /></Icon>
      <Icon x={132} y={132} w={11} h={14} mt={5} ml={15}><path d="M165 133v41l-33-21z" fill="url(#arrow)" /></Icon>
      <PageField>Page 1 of 1</PageField>
      <Icon x={630} y={132} w={11} h={14} mt={5}><path d="M630 133v41l33-21z" fill="url(#arrow)" /></Icon>
      <Icon x={711} y={132} w={14} h={14} mt={5} ml={16}><path d="M751.500 132v42" stroke="#a3a4a6" strokeWidth="3" /><path d="M711 133v41l33-21z" fill="url(#arrow)" /></Icon>
    </Pager>
    <DialogFooter><CloseButton>Close</CloseButton></DialogFooter>
  </Dialog>
);

export default function App() {
  return (
    <Screen>
      <GlobalStyle />
      <Defs />
      <TitleBar>
        <QuickAccess />
        <AppTitle>HIBERNIA-HEBRON (Sheet_1) - PTC Creo Schematics 3.0</AppTitle>
      </TitleBar>
      <Tabs>
        <FileTab $w={42} $x={0}>File<Caret ml={3} mt={9} c="#5c5d60" /></FileTab>
        <Tab $w={115} $x={10} $on>Diagramming</Tab>
        <Tab $w={93} $x={11}>Geometry</Tab>
        <Tab $w={54} $x={11}>Text</Tab>
        <Tab $w={98} $x={10}>Properties</Tab>
        <Tab $w={55} $x={10}>Data</Tab>
        <Tab $w={62} $x={12}>Tools</Tab>
        <Tab $w={56} $x={10}>View</Tab>
        <Tab $w={74} $x={10}>Design</Tab>
        <Tab $w={103} $x={9} $last>Get Started</Tab>
      </Tabs>
      <RibbonBar />
      <GroupBand />
      <Canvas>
        <Drawing width="200" height="95"><path d="M1.500 0v93" stroke="#000" strokeWidth="1" /><path d="M29.500 0v48.500H200" stroke="#000" strokeWidth="3" fill="none" /></Drawing>
      </Canvas>
      <Splitter><Handle><svg width="7" height="5"><path d="M1 4.500L3.500 2 6 4.500" stroke="#222" strokeWidth="1.500" fill="none" /></svg></Handle></Splitter>
      <SheetBar>
        <Icon x={0} y={573} w={2} h={10} mt={7}><path d="M6 573v27l-12-13z" fill="#66676a" /></Icon>
        <Icon x={31} y={573} w={8} h={9} mt={7} ml={8}><path d="M55 573v26l-24-13z" fill="#a9aaac" /></Icon>
        <Icon x={78} y={573} w={8} h={9} mt={7} ml={8}><path d="M78 573v26l24-13z" fill="#a9aaac" /></Icon>
        <Icon x={126} y={576} w={11} h={7} mt={8} ml={8}><path d="M126 576v21l16-11zM142 576v21l16-11z" fill="#58595c" /></Icon>
        <SheetAdd><svg width="7" height="7"><path d="M3.500 0v7M0 3.500h7" stroke="#4a4b4e" strokeWidth="1.800" /></svg></SheetAdd>
        <SheetTab><Label $b $s={14}>Sheet_1</Label></SheetTab>
      </SheetBar>
      <Status>
        <Icon x={0} y={694} w={3} h={12} mt={16}><path d="M0 702l6-6M0 706h8M0 716l6 2M0 724l7 4" stroke="#333" strokeWidth="4" /></Icon>
        <StatusRule $ml={10} />
        <Messages>
          <Message><svg width="5" height="10"><path d="M0 0v10l5-5z" fill="#0000f0" /></svg><Label $ml={4}>Probe the components or geometry you want to select</Label></Message>
          <Message><svg width="5" height="10"><path d="M0 0v10l5-5z" fill="#0000f0" /></svg><Label $ml={4} $s={12.95}>Load of Central Catalog item operation canceled.</Label></Message>
        </Messages>
        <StatusEnd>
          <StatusRule $ml={7} $h={26} />
          <Icon x={534} y={280} w={10} h={7} mt={19} ml={14}><path d="M534 280h3l6 9-6 10h-3z" fill="#17b01f" stroke="#222" strokeWidth="2" /><path d="M543 289h12" stroke="#888" strokeWidth="6" /></Icon>
          <StatusRule $ml={1} $h={26} />
          <StatusButton><svg width="14" height="14"><path d="M0 0h14v14H0z" fill="#3a3a3d" /></svg></StatusButton>
        </StatusEnd>
      </Status>
      <TaskBar />
      <Catalog />
      <ErrorDialog />
    </Screen>
  );
}
